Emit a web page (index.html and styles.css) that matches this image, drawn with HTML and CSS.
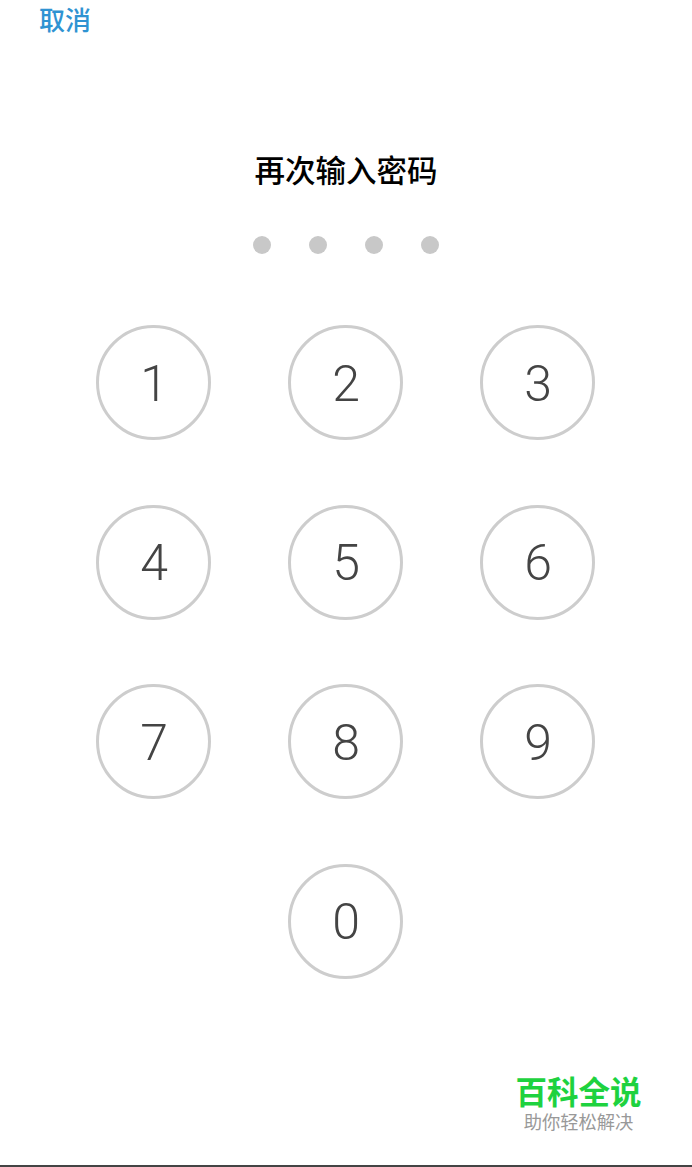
FILE: index.html
```html
<!DOCTYPE html>
<html lang="zh-CN">
<head>
<meta charset="utf-8">
<title>再次输入密码</title>
<link rel="stylesheet" href="styles.css">
</head>
<body>
<main class="screen">
  <header class="topbar"><a class="cancel">取消</a></header>
  <h1 class="title">再次输入密码</h1>
  <div class="dots">
    <span class="dot"></span><span class="dot"></span><span class="dot"></span><span class="dot"></span>
  </div>
  <div class="keypad">
    <button class="key">1</button>
    <button class="key">2</button>
    <button class="key">3</button>
    <button class="key">4</button>
    <button class="key">5</button>
    <button class="key">6</button>
    <button class="key">7</button>
    <button class="key">8</button>
    <button class="key">9</button>
    <button class="key key-zero">0</button>
  </div>
  <aside class="mark">
    <div class="mark-name">百科全说</div>
    <div class="mark-sub">助你轻松解决</div>
  </aside>
</main>
</body>
</html>
```

FILE: styles.css
```css
* { box-sizing: border-box; }
html, body { margin: 0; padding: 0; background: #fff; }
body { font-family: Roboto, "Noto Sans CJK SC", sans-serif; }
.screen {
  position: relative;
  height: 1167px;
  width: 692px;
  overflow: hidden;
  border-bottom: 2px solid #444;
  display: flex;
  flex-direction: column;
  align-items: center;
}
.topbar { align-self: stretch; height: 150px; padding: 3px 0 0 39px; }
.cancel { display: block; font-size: 26px; line-height: 36px; color: #2f93d2; font-weight: 500; }
.title { margin: 0; height: 44px; font-size: 30.5px; line-height: 44px; font-weight: 500; color: #000; }
.dots { margin-top: 42px; display: flex; gap: 38px; }
.dot { width: 18px; height: 18px; border-radius: 50%; background: #c8c8c8; }
.keypad {
  margin: 71px 0 0 -1px;
  display: grid;
  grid-template-columns: repeat(3, 115px);
  grid-auto-rows: 115px;
  column-gap: 77px;
  row-gap: 64.5px;
}
.key {
  width: 115px;
  height: 115px;
  padding: 2px 0 0 1px;
  border: 3px solid #cdcdcd;
  border-radius: 50%;
  background: #fff;
  font-family: Roboto, sans-serif;
  font-weight: 300;
  font-size: 50px;
  line-height: 1;
  color: #444;
}
.key-zero { grid-column: 2; }
.mark {
  position: absolute;
  left: 515px;
  top: 1075px;
  width: 127px;
  text-align: center;
}
.mark-name { margin-bottom: -2px; font-size: 31.5px; line-height: 38px; font-weight: 700; color: #1ed23f; white-space: nowrap; }
.mark-sub { font-size: 18.3px; line-height: 24px; color: #999; white-space: nowrap; }
```
